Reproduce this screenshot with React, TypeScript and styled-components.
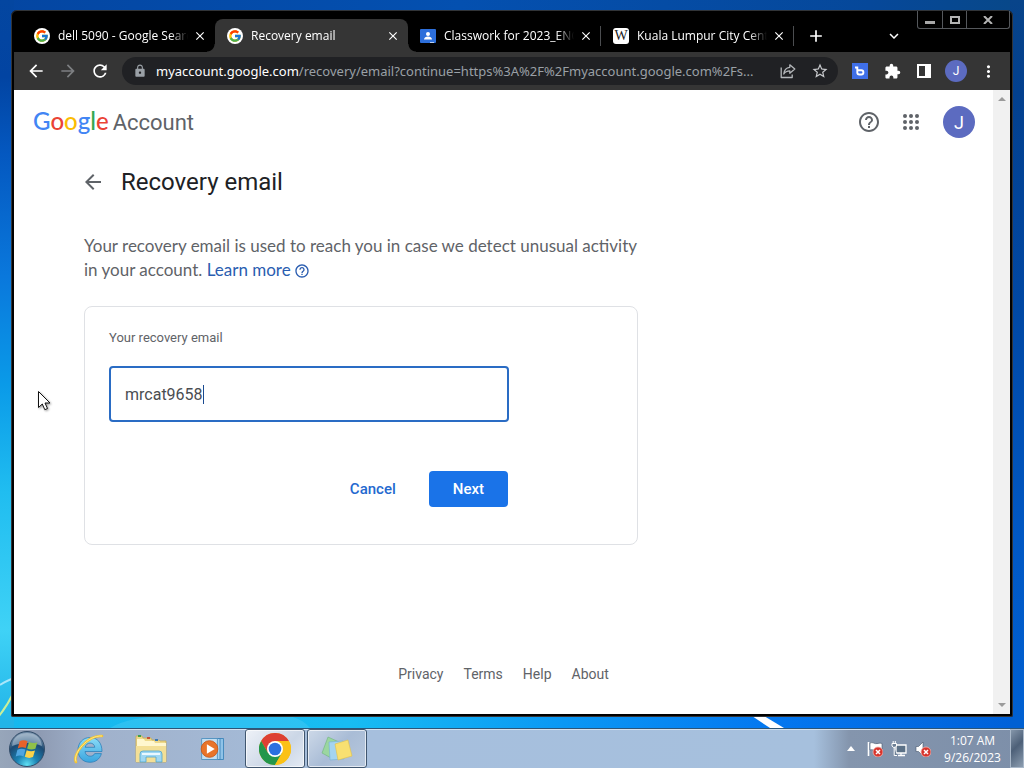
import React, { useState } from 'react';
import styled, { createGlobalStyle, css } from 'styled-components';
import {
  MdArrowBack,
  MdArrowForward,
  MdRefresh,
  MdLock,
  MdStarBorder,
  MdExtension,
  MdMoreVert,
  MdClose,
  MdAdd,
  MdExpandMore,
  MdHelpOutline,
} from 'react-icons/md';
import { FcGoogle } from 'react-icons/fc';

const system = '"Open Sans", "Noto Sans", sans-serif';
const product = 'Roboto, "Liberation Sans", sans-serif';

const GlobalStyle = createGlobalStyle`
  * { box-sizing: border-box; }
  body { margin: 0; font-family: ${product}; color: #202124; }
  button { font: inherit; color: inherit; background: none; border: 0; padding: 0; cursor: pointer; }
  svg { display: block; flex: none; }
`;

/* ---------- Desktop ---------- */

const Desktop = styled.div`
  display: flex;
  flex-direction: column;
  min-height: 100vh;
  overflow: hidden;
  position: relative;
  background:
    linear-gradient(#0446a0 0, #0244a2 10%, #0458c0 20%, #0a78dc 36%, #0a9ae8 50%, #20bdf0 64%, #3fd2f6 82%, #22b4e8 94%) left / 14px 100% no-repeat,
    linear-gradient(#08448a 0, #03408e 12%, #0148a4 40%, #0158c4 70%, #0060d2 94%) right / 14px 100% no-repeat,
    linear-gradient(90deg, #0446a2, #0450b0 45%, #06489a 85%, #084888) top / 100% 40px no-repeat,
    linear-gradient(90deg, #16b8ee 0, #18bcf2 34%, #0a98f4 55%, #0478f0 75%, #0060d8 100%);
`;

const Streaks = styled.svg`
  position: absolute;
  left: 0;
  bottom: 40px;
`;

const Window = styled.section`
  flex: 1;
  display: flex;
  flex-direction: column;
  position: relative;
  margin: 10px 11px 11px;
  border: 3px solid #000;
  border-top-width: 2px;
  border-radius: 6px 6px 2px 2px;
  background: #000;
  outline: 1px solid rgba(70, 74, 80, 0.7);
  outline-offset: -1px;
`;

const Pointer = styled.svg`
  position: absolute;
  left: 37px;
  top: 390px;
  filter: drop-shadow(1px 1px 1px rgba(0, 0, 0, 0.4));
`;

/* ---------- Window buttons ---------- */

const WindowButtons = styled.div`
  position: absolute;
  top: -1px;
  right: 0;
  display: flex;
  border: 1px solid #55585c;
  border-top: 0;
  border-radius: 0 0 3px 3px;
`;

const WindowButton = styled.button<{ $wide?: boolean }>`
  display: grid;
  place-items: center;
  width: ${p => (p.$wide ? 43 : 24)}px;
  height: 17px;
  & + & { border-left: 1px solid #55585c; }
`;

/* ---------- Tabs ---------- */

const TabStrip = styled.div`
  display: flex;
  align-items: flex-end;
  height: 40px;
  padding: 0 110px 0 8px;
  font: 12px/18px ${system};
  color: #fff;
`;

const Tab = styled.div<{ $active?: boolean; $divided?: boolean }>`
  display: flex;
  align-items: center;
  flex: 0 1 193px;
  min-width: 0;
  height: 33px;
  padding: 1px 7px 0 12px;
  position: relative;
  ${p => p.$active && css`
    background: #353535;
    border-radius: 8px 8px 0 0;
    &::before, &::after {
      content: '';
      position: absolute;
      bottom: 0;
      width: 8px;
      height: 8px;
    }
    &::before { left: -8px; background: radial-gradient(circle at 0 0, transparent 7px, #353535 8px); }
    &::after { right: -8px; background: radial-gradient(circle at 100% 0, transparent 7px, #353535 8px); }
  `}
  ${p => p.$divided && css`
    &::after {
      content: '';
      position: absolute;
      right: 0;
      top: 7px;
      width: 1px;
      height: 20px;
      background: #4b4d50;
    }
  `}
`;

const Favicon = styled.span<{ $round?: boolean }>`
  display: grid;
  place-items: center;
  flex: none;
  width: 16px;
  height: 16px;
  border-radius: ${p => (p.$round ? '50%' : '3px')};
  background: #fff;
  color: #222;
  font: 14px/16px "Liberation Serif", serif;
  overflow: hidden;
`;

const TabTitle = styled.span`
  flex: 1;
  min-width: 0;
  margin: 0 4px 0 8px;
  overflow: hidden;
  white-space: nowrap;
  mask-image: linear-gradient(90deg, #000 calc(100% - 18px), transparent);
`;

const TabButton = styled.button`
  display: grid;
  place-items: center;
  width: 16px;
  height: 16px;
`;

const NewTab = styled(TabButton)`
  width: 28px;
  height: 33px;
  margin-left: 8px;
`;

const TabSearch = styled(NewTab)`
  margin-left: auto;
  margin-right: -8px;
`;

/* ---------- Toolbar ---------- */

const Toolbar = styled.div`
  display: flex;
  align-items: center;
  height: 38px;
  padding: 0 6px;
  background: #353535;
  color: #fff;
`;

const ToolButton = styled.button<{ $dim?: boolean }>`
  display: grid;
  place-items: center;
  flex: none;
  width: 32px;
  height: 28px;
  color: ${p => (p.$dim ? '#7d7f82' : '#fff')};
`;

const Omnibox = styled.div`
  display: flex;
  align-items: center;
  flex: 1;
  min-width: 0;
  height: 28px;
  margin: 0 6px;
  padding: 0 2px 0 11px;
  border-radius: 14px;
  background: #202124;
  color: #9aa0a6;
  font: 13px/20px "Noto Sans", sans-serif;
`;

const Address = styled.span`
  flex: 1;
  min-width: 0;
  margin-left: 9px;
  margin-right: 8px;
  overflow: hidden;
  text-overflow: ellipsis;
  white-space: nowrap;
`;

const Host = styled.span`color: #fff;`;

const Extension = styled.span`
  display: grid;
  place-items: center;
  width: 16px;
  height: 16px;
  background: #3f6fe8;
`;

const Avatar = styled.span<{ $large?: boolean }>`
  display: grid;
  place-items: center;
  width: ${p => (p.$large ? 32 : 22)}px;
  height: ${p => (p.$large ? 32 : 22)}px;
  border-radius: 50%;
  background: #5c6bc0;
  color: #fff;
  font: ${p => (p.$large ? 18 : 12)}px ${product};
`;

/* ---------- Page ---------- */

const Viewport = styled.div`
  flex: 1;
  display: flex;
  background: #fff;
`;

const Page = styled.div`
  flex: 1;
  min-width: 0;
  display: flex;
  flex-direction: column;
`;

const Scrollbar = styled.div`
  display: flex;
  flex-direction: column;
  justify-content: space-between;
  align-items: center;
  width: 17px;
  padding: 7px 0;
  background: #f1f1f1;
`;

const Header = styled.header`
  display: flex;
  align-items: center;
  gap: 18px;
  height: 64px;
  padding: 0 18px 0 19px;
  color: #5f6368;
`;

const Logo = styled.a`
  display: flex;
  align-items: baseline;
  gap: 4px;
  margin-right: auto;
  color: #5f6368;
  text-decoration: none;
  font: 22px/32px ${product};
`;

const Wordmark = styled.span`
  font: 500 24px/32px "Lato Medium", Lato, sans-serif;
`;

const Letter = styled.span<{ $color: string }>`color: ${p => p.$color};`;

const HeaderButton = styled.button`
  &:last-child { margin-left: 2px; }
`;

const Main = styled.main`
  padding: 9px 70px 0;
`;

const Heading = styled.div`
  display: flex;
  align-items: center;
  gap: 16px;
  height: 38px;
  margin-left: -3px;
  color: #5f6368;
`;

const Title = styled.h1`
  margin: 0;
  font: 400 24px/32px ${product};
  color: #202124;
`;

const Intro = styled.p`
  max-width: 554px;
  margin: 33px 0 24px;
  font: 17px/24px Lato, sans-serif;
  color: #5f6368;
`;

const LearnMore = styled.a`
  color: #2a5db0;
  text-decoration: none;
  svg {
    display: inline-block;
    margin-left: 3px;
    vertical-align: -3px;
  }
`;

const Card = styled.form`
  max-width: 554px;
  padding: 23px 24px 37px;
  border: 1px solid #dfe1e5;
  border-radius: 8px;
`;

const Label = styled.label`
  display: block;
  font-size: 13px;
  line-height: 16px;
  color: #5f6368;
`;

const Field = styled.div`
  position: relative;
  max-width: 400px;
  margin-top: 20px;
`;

const TextBox = styled.input`
  display: block;
  width: 100%;
  height: 56px;
  padding: 0 14px;
  border: 2px solid #2a6cc4;
  border-radius: 4px;
  outline: 0;
  background: #fff;
  color: #4a4d51;
  caret-color: transparent;
  font: 16px/24px ${product};
`;

const Caret = styled.span`
  position: absolute;
  left: 94px;
  top: 19px;
  width: 1px;
  height: 19px;
  background: #1a4a90;
`;

const Actions = styled.div`
  display: flex;
  justify-content: flex-end;
  gap: 9px;
  max-width: 399px;
  margin-top: 49px;
`;

const Action = styled.button<{ $primary?: boolean }>`
  height: 36px;
  padding: 0 24px;
  border-radius: 4px;
  font: 500 15px/20px ${product};
  color: ${p => (p.$primary ? '#fff' : '#2469cf')};
  background: ${p => (p.$primary ? '#1a73e8' : 'none')};
`;

const Footer = styled.footer`
  display: flex;
  justify-content: center;
  gap: 20px;
  margin-top: auto;
  padding-bottom: 30px;
  font-size: 14px;
  line-height: 20px;
`;

const FooterLink = styled.a`
  color: #5f6368;
  text-decoration: none;
`;

/* ---------- Taskbar ---------- */

const Taskbar = styled.div`
  display: flex;
  height: 40px;
  border-top: 1px solid #2c5578;
  box-shadow: inset 0 1px #d4e2f0;
  background: linear-gradient(90deg, #97a6ba 0, #8e9bb3 40px, #a0b1cb 90px, #a6bfdd 360px, #a6c0dd calc(100% - 210px), #8495ad calc(100% - 175px), #7d8fa9 100%);
`;

const Start = styled.button`
  display: grid;
  place-items: center;
  width: 54px;
  margin-right: 5px;
`;

const TaskButton = styled.button<{ $state?: 'open' | 'active' }>`
  display: grid;
  place-items: center;
  width: 60px;
  margin-right: 2px;
  border-radius: 3px;
  ${p => p.$state && css`
    border: 1px solid #40566f;
    box-shadow: inset 0 0 0 1px rgba(255, 255, 255, 0.65);
    background: ${p.$state === 'active'
      ? 'linear-gradient(135deg, #eef2f8, #cbd6e6 60%, #e4ebf4)'
      : 'linear-gradient(135deg, #cdd9e8, #a9bcd6 50%, #b7c8dd)'};
  `}
`;

const Tray = styled.div`
  display: flex;
  align-items: center;
  margin-left: auto;
`;

const TrayButton = styled.button`
  display: grid;
  place-items: center;
  width: 24px;
  height: 24px;
`;

const Clock = styled.time`
  width: 75px;
  text-align: center;
  color: #fff;
  font: 12px/17px ${system};
`;

const ShowDesktop = styled.button`
  align-self: stretch;
  width: 14px;
  border: 1px solid #a9b8c9;
  background: linear-gradient(135deg, #8496aa, #4d6078 45%, #8c9db0);
`;

/* ---------- Drawings ---------- */

const GoogleFavicon = () => <Favicon $round><FcGoogle size={14} /></Favicon>;

const ClassroomIcon = () => (
  <svg width="16" height="16" viewBox="0 0 16 16">
    <rect y="1" width="16" height="14" rx="1" fill="#2d6fdb" />
    <circle cx="8" cy="6" r="2" fill="#fff" />
    <path d="M4 11.5c0-2 2-3 4-3s4 1 4 3z" fill="#fff" />
    <path d="M10 14h4v1h-4z" fill="#b9d0f5" />
  </svg>
);

const ShareIcon = () => (
  <svg width="16" height="16" viewBox="0 0 16 16" fill="none" stroke="#b4b7ba" strokeWidth="1.3" strokeLinejoin="round">
    <path d="M1.2 4.5v10h11v-3" />
    <path d="M9.8 1.8 14.8 6l-5 4.2V7.8C7 7.8 5 8.8 3.8 11c.3-4 2.6-6.3 6-6.7z" />
  </svg>
);

const ExtensionGlyph = () => (
  <svg width="10" height="10" viewBox="0 0 10 10" fill="none" stroke="#fff" strokeWidth="1.9">
    <path d="M0 1.5h2.3v5a2 2 0 0 0 2 2h2a2 2 0 0 0 0-4.2H2.5" />
  </svg>
);

const SidePanelIcon = () => (
  <svg width="14" height="14" viewBox="0 0 14 14">
    <path fill="#fff" fillRule="evenodd" d="M0 0h14v14H0zM2 2v10h6V2z" />
  </svg>
);

const AppsIcon = () => (
  <svg width="24" height="24" viewBox="0 0 24 24" fill="#5f6368">
    {[6, 12, 18].map(y => [6, 12, 18].map(x => <circle key={`${x}-${y}`} cx={x} cy={y} r="2" />))}
  </svg>
);

const Triangle = ({ down }: { down?: boolean }) => (
  <svg width="8" height="4" viewBox="0 0 8 4"><path d={down ? 'M0 0h8L4 4z' : 'M0 4h8L4 0z'} fill="#9b9b9b" /></svg>
);

const Flag = () => (
  <>
    <path d="M9.5 10.5C12 8.8 15 9 17.5 10.2L15.8 17C13 15.8 10.3 16 7.8 17.4z" fill="#e8622a" />
    <path d="M19 11c3 1.5 5.5 1.3 8.3.2L25.4 17.8c-3 1.2-5.6 1-8.3-.3z" fill="#8fc14a" />
    <path d="M7.4 18.7c2.6-1.3 5.2-1.4 8-.2l-1.9 6.9c-2.6-1.3-5-1.1-7.8.1z" fill="#4fa5e0" />
    <path d="M16.7 19.2c2.8 1.3 5.5 1.5 8.3.3l-2 6.6c-2.8 1.2-5.4 1-8.2-.3z" fill="#fbd24a" />
  </>
);

const StartOrb = () => (
  <svg width="36" height="36" viewBox="0 0 36 36">
    <defs>
      <radialGradient id="orb" cx="50%" cy="95%" r="85%">
        <stop offset="0" stopColor="#5fe0f4" />
        <stop offset="0.35" stopColor="#1b83b4" />
        <stop offset="0.75" stopColor="#1c4a73" />
        <stop offset="1" stopColor="#6f8ba6" />
      </radialGradient>
    </defs>
    <circle cx="18" cy="18" r="17.5" fill="url(#orb)" stroke="#324c68" />
    <path d="M3 15C4 6 10 2 18 2s14 4 15 13c-9-4-20-4-30 0z" fill="#d3dfea" opacity="0.45" />
    <g transform="translate(1 0)"><Flag /></g>
  </svg>
);

const ExplorerE = () => (
  <svg width="32" height="32" viewBox="0 0 32 32" fill="none">
    <defs>
      <linearGradient id="ie" x1="0" y1="0" x2="0" y2="1">
        <stop offset="0" stopColor="#8adcf8" /><stop offset="1" stopColor="#3aa4de" />
      </linearGradient>
    </defs>
    <path d="M17 4.5c7.5 0 12 5.5 12 14H12c.3 3 2.3 4.7 5.2 4.7 2.2 0 3.7-.9 4.5-2.6h6.7c-1.5 5.5-5.8 8.7-11.4 8.7C9.8 29.3 5 24.2 5 17S10 4.5 17 4.5zM12.2 14.3h9.6c-.4-2.7-2.2-4.2-4.7-4.2s-4.3 1.5-4.9 4.2z" fill="url(#ie)" stroke="#2379b5" strokeWidth=".7" fillRule="evenodd" />
    <path d="M3 29C-1 22 14 2 29 3" stroke="#f4c430" strokeWidth="2.6" strokeLinecap="round" />
    <path d="M3 28.5C-.5 21 14.5 2 29 3" stroke="#fff0a0" strokeWidth=".8" />
  </svg>
);

const FolderIcon = () => (
  <svg width="32" height="32" viewBox="0 0 32 32">
    <path d="M1 3h6l1 2h8l1 2h7l1 1h6v21H1z" fill="#eed98b" stroke="#c9ad55" strokeWidth=".8" />
    <path d="M2 6h7l1 2h9l1 2h11v4H2z" fill="#fff7cf" />
    <path d="M3 2h3v2H3z" fill="#3f9f4a" /><path d="M12 4h3v2h-3z" fill="#c8523a" /><path d="M20 6h3v2h-3z" fill="#3a78b8" />
    <path d="M1 13h30v16H1z" fill="#f3df96" />
    <path d="M5 29v-8a3 3 0 0 1 3-3h16a3 3 0 0 1 3 3v8h-6v-5H11v5z" fill="#9fd7f2" stroke="#4fa3cc" strokeWidth=".8" />
    <path d="M7 21h18" stroke="#e9f8ff" strokeWidth="2" />
  </svg>
);

const MediaIcon = () => (
  <svg width="28" height="28" viewBox="0 0 32 32">
    <path d="M12 4h16v24H12z" fill="#8fc3e8" stroke="#3b83b8" />
    <path d="M8 4h16v24H8z" fill="#a9d2ee" stroke="#3b83b8" />
    <path d="M3 4h18v24H3z" fill="#c3dff2" stroke="#4f90bf" />
    <circle cx="12" cy="16" r="9.5" fill="#e8742a" stroke="#c9591a" />
    <path d="M9 10.5v11l9-5.5z" fill="#fff" />
  </svg>
);

const ChromeIcon = () => (
  <svg width="32" height="32" viewBox="0 0 32 32">
    <circle cx="16" cy="16" r="16" fill="#fbc116" />
    <path d="M2.14 8A16 16 0 0 1 29.86 8H16L9.07 20z" fill="#dd4033" />
    <path d="M2.14 8A16 16 0 0 0 16 32l6.93-12-13.86 0z" fill="#24964b" />
    <path d="M16 8h13.86A16 16 0 0 1 16 32l6.93-12z" fill="#fbc116" />
    <circle cx="16" cy="16" r="8" fill="#fff" />
    <circle cx="16" cy="16" r="6.3" fill="#2a70e0" />
  </svg>
);

const NotesIcon = () => (
  <svg width="32" height="28" viewBox="0 0 32 28">
    <path d="M7 2l11 5-6 17L1 18z" fill="#9bd6a0" stroke="#6fb57c" strokeWidth=".6" />
    <path d="M8 7l14-1 1 18-14 1z" fill="#a4d4f0" stroke="#74b0d6" strokeWidth=".6" />
    <path d="M14 9l13-4 4 16-14 4z" fill="#f8e071" stroke="#dfc04a" strokeWidth=".6" />
  </svg>
);

const ErrorBadge = () => (
  <g>
    <circle cx="11" cy="11" r="5" fill="#d8342c" stroke="#f3b3ad" strokeWidth=".8" />
    <path d="M9 9l4 4m0-4-4 4" stroke="#fff" strokeWidth="1.5" />
  </g>
);

const ActionCenterIcon = () => (
  <svg width="16" height="16" viewBox="0 0 16 16">
    <path d="M1.5 1v14" stroke="#fff" strokeWidth="1.6" />
    <path d="M3 2c3-1.5 4 1.5 8 .5 1.5-.4 2.5-.5 4 0v6c-3-.5-3.5 1-6 1S5.5 8 3 9z" fill="#fff" stroke="#44556c" strokeWidth=".6" />
    <ErrorBadge />
  </svg>
);

const NetworkIcon = () => (
  <svg width="16" height="16" viewBox="0 0 16 16">
    <path d="M5 4h10v8H5z" fill="#5c7187" stroke="#fff" strokeWidth="1.3" />
    <path d="M7 14.5h7M10 12v2" stroke="#fff" strokeWidth="1.3" />
    <path d="M1 2.5h4.5V5L4.3 6.3H2.2L1 5zM2.2 0v2.5M4.3 0v2.5M3.2 6.3v8.2H6" stroke="#fff" fill="#6c7f95" />
  </svg>
);

const VolumeIcon = () => (
  <svg width="16" height="16" viewBox="0 0 16 16">
    <path d="M1 5.5h2.5L8 1v14L3.5 10.5H1z" fill="#fff" stroke="#44556c" strokeWidth=".6" />
    <ErrorBadge />
  </svg>
);

/* ---------- App ---------- */

const wordmark: [string, string][] = [
  ['G', '#4285f4'], ['o', '#ea4335'], ['o', '#fbbc04'], ['g', '#4285f4'], ['l', '#34a853'], ['e', '#ea4335'],
];

const tabs = [
  { title: 'dell 5090 - Google Search', icon: <GoogleFavicon /> },
  { title: 'Recovery email', icon: <GoogleFavicon />, active: true },
  { title: 'Classwork for 2023_ENG', icon: <ClassroomIcon />, divided: true },
  { title: 'Kuala Lumpur City Centre', icon: <Favicon>W</Favicon>, divided: true },
];

export default function App() {
  const [email, setEmail] = useState('mrcat9658');

  return (
    <>
      <GlobalStyle />
      <Desktop>
        <Streaks width="800" height="60" viewBox="0 0 800 60" fill="none" aria-hidden="true">
          <path d="M0 17Q8 12 14 10" stroke="#a9e6fa" strokeWidth="2" />
          <path d="M-1 48Q7 38 14 24" stroke="#c9ef9a" strokeWidth="2" />
          <path d="M110 60Q130 48 170 48H290Q304 52 310 60z" fill="#5fd0f6" opacity="0.3" />
          <path d="M752 48h12l20 12h-14z" fill="#fff" />
        </Streaks>

        <Window aria-label="Recovery email - Google Chrome">
          <TabStrip>
            {tabs.map(t => (
              <Tab key={t.title} $active={t.active} $divided={t.divided}>
                {t.icon}
                <TabTitle>{t.title}</TabTitle>
                <TabButton aria-label="Close tab"><MdClose size={14} /></TabButton>
              </Tab>
            ))}
            <NewTab aria-label="New tab"><MdAdd size={20} /></NewTab>
            <TabSearch aria-label="Search tabs"><MdExpandMore size={18} /></TabSearch>
          </TabStrip>
          <WindowButtons>
            <WindowButton aria-label="Minimize">
              <svg width="10" height="10"><path d="M0 6h10v3H0z" fill="#a8a8a8" /></svg>
            </WindowButton>
            <WindowButton aria-label="Maximize">
              <svg width="10" height="8"><path d="M1 1h8v6H1z" fill="none" stroke="#b4b4b4" strokeWidth="2" /></svg>
            </WindowButton>
            <WindowButton $wide aria-label="Close">
              <svg width="10" height="8"><path d="M1 0l8 8M9 0L1 8" stroke="#b4b4b4" strokeWidth="2" /></svg>
            </WindowButton>
          </WindowButtons>

          <Toolbar>
            <ToolButton aria-label="Back"><MdArrowBack size={20} /></ToolButton>
            <ToolButton $dim aria-label="Forward"><MdArrowForward size={20} /></ToolButton>
            <ToolButton aria-label="Reload"><MdRefresh size={20} /></ToolButton>
            <Omnibox>
              <MdLock size={14} />
              <Address>
                <Host>myaccount.google.com</Host>/recovery/email?continue=https%3A%2F%2Fmyaccount.google.com%2Fs...
              </Address>
              <ToolButton aria-label="Share"><ShareIcon /></ToolButton>
              <ToolButton aria-label="Bookmark"><MdStarBorder size={18} color="#c8cacd" /></ToolButton>
            </Omnibox>
            <ToolButton aria-label="Extension"><Extension><ExtensionGlyph /></Extension></ToolButton>
            <ToolButton aria-label="Extensions"><MdExtension size={17} /></ToolButton>
            <ToolButton aria-label="Side panel"><SidePanelIcon /></ToolButton>
            <ToolButton aria-label="Profile"><Avatar>J</Avatar></ToolButton>
            <ToolButton aria-label="Menu"><MdMoreVert size={19} /></ToolButton>
          </Toolbar>

          <Viewport>
            <Page>
              <Header>
                <Logo href="#">
                  <Wordmark>{wordmark.map(([c, color], i) => <Letter key={i} $color={color}>{c}</Letter>)}</Wordmark>
                  <span>Account</span>
                </Logo>
                <HeaderButton aria-label="Help"><MdHelpOutline size={24} /></HeaderButton>
                <HeaderButton aria-label="Apps"><AppsIcon /></HeaderButton>
                <HeaderButton aria-label="Account"><Avatar $large>J</Avatar></HeaderButton>
              </Header>

              <Main>
                <Heading>
                  <button aria-label="Go back"><MdArrowBack size={24} /></button>
                  <Title>Recovery email</Title>
                </Heading>
                <Intro>
                  Your recovery email is used to reach you in case we detect unusual activity in your account.{' '}
                  <LearnMore href="#">Learn more<MdHelpOutline size={16} /></LearnMore>
                </Intro>
                <Card onSubmit={e => e.preventDefault()}>
                  <Label htmlFor="email">Your recovery email</Label>
                  <Field>
                    <TextBox id="email" value={email} onChange={e => setEmail(e.target.value)} />
                    <Caret />
                  </Field>
                  <Actions>
                    <Action type="button">Cancel</Action>
                    <Action $primary type="submit">Next</Action>
                  </Actions>
                </Card>
              </Main>

              <Footer>
                {['Privacy', 'Terms', 'Help', 'About'].map(l => <FooterLink key={l} href="#">{l}</FooterLink>)}
              </Footer>
            </Page>
            <Scrollbar aria-hidden="true"><Triangle /><Triangle down /></Scrollbar>
          </Viewport>
        </Window>

        <Taskbar>
          <Start aria-label="Start"><StartOrb /></Start>
          <TaskButton aria-label="Internet Explorer"><ExplorerE /></TaskButton>
          <TaskButton aria-label="Windows Explorer"><FolderIcon /></TaskButton>
          <TaskButton aria-label="Media Player"><MediaIcon /></TaskButton>
          <TaskButton $state="active" aria-label="Google Chrome"><ChromeIcon /></TaskButton>
          <TaskButton $state="open" aria-label="Sticky Notes"><NotesIcon /></TaskButton>
          <Tray>
            <TrayButton aria-label="Show hidden icons">
              <svg width="8" height="5" viewBox="0 0 8 5"><path d="M0 5h8L4 0z" fill="#fff" /></svg>
            </TrayButton>
            <TrayButton aria-label="Action Center"><ActionCenterIcon /></TrayButton>
            <TrayButton aria-label="Network"><NetworkIcon /></TrayButton>
            <TrayButton aria-label="Volume"><VolumeIcon /></TrayButton>
            <Clock>1:07 AM<br />9/26/2023</Clock>
            <ShowDesktop aria-label="Show desktop" />
          </Tray>
        </Taskbar>

        <Pointer width="14" height="22" viewBox="0 0 14 22" aria-hidden="true">
          <path d="M1.5 1.5v16l3.8-3.5 2.5 5.7 2.7-1.2-2.5-5.5H13z" fill="#fff" stroke="#111" />
        </Pointer>
      </Desktop>
    </>
  );
}
